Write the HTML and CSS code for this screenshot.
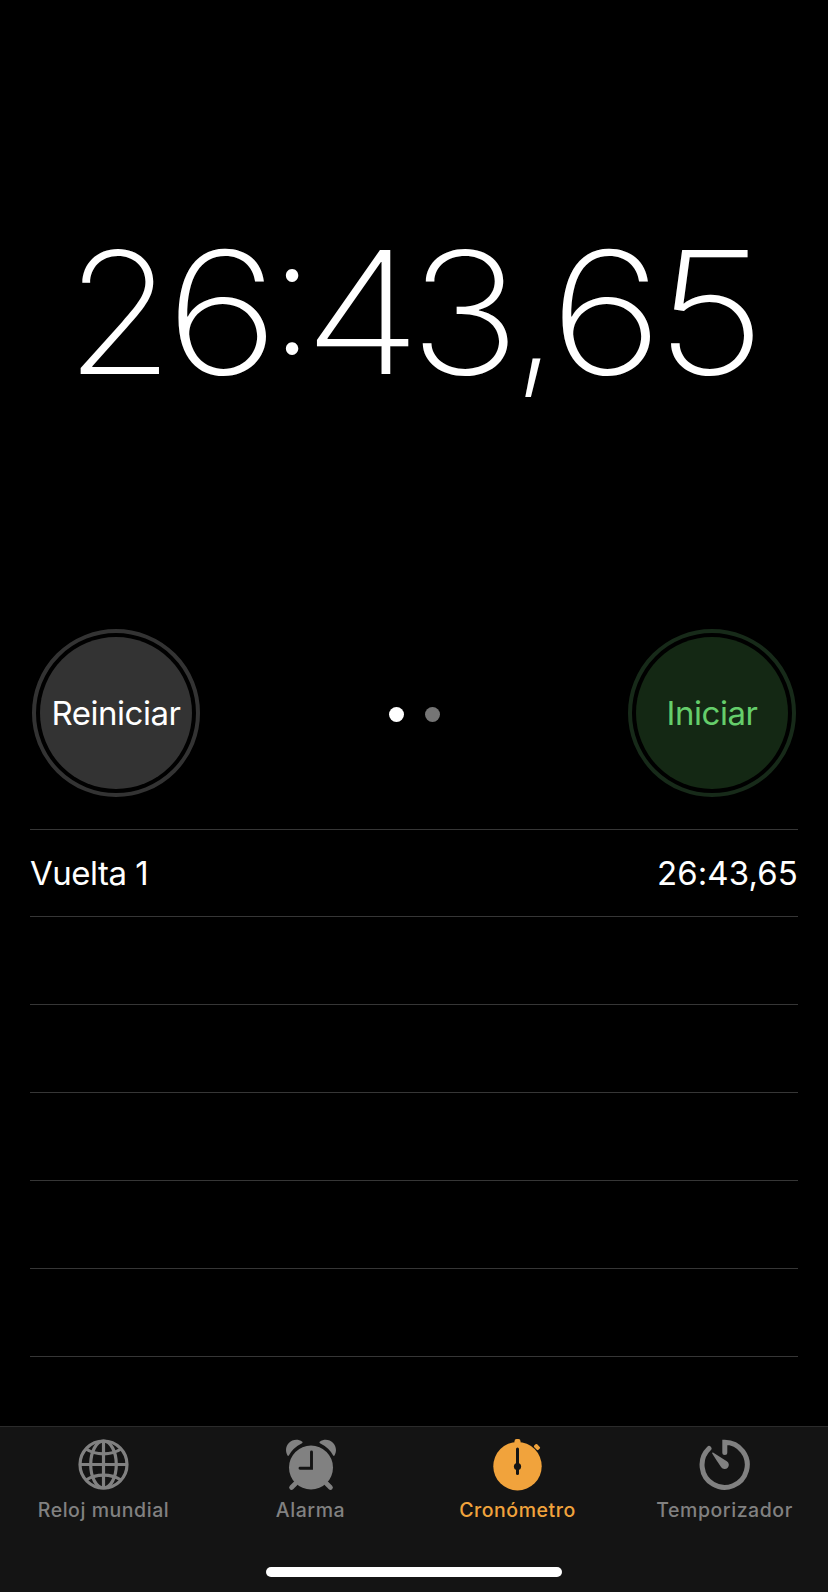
FILE: index.html
```html
<!DOCTYPE html>
<html lang="es">
<head>
  <meta charset="UTF-8" />
  <meta name="viewport" content="width=device-width, initial-scale=1.0" />
  <title>Cronómetro</title>
  <link rel="stylesheet" href="styles.css">
</head>
<body>

<div class="app">
  <div class="tiempo"><span class="dos">2</span><span class="seis">6</span><span class="puntos">:</span><span class="cuatro">4</span><span class="tres">3</span><span class="coma">,</span><span class="seis decimas">6</span><span class="cinco">5</span></div>

  <div class="controles">
    <button class="boton reiniciar"><span>Reiniciar</span></button>
    <div class="paginas">
      <i class="activa"></i>
      <i></i>
    </div>
    <button class="boton iniciar"><span>Iniciar</span></button>
  </div>

  <div class="vueltas">
    <div class="vuelta"><span class="nombre">Vuelta 1</span><span class="marca">26:43,65</span></div>
    <div class="vuelta"></div>
    <div class="vuelta"></div>
    <div class="vuelta"></div>
    <div class="vuelta"></div>
    <div class="vuelta"></div>
    <div class="vuelta"></div>
  </div>

  <nav class="barra">
    <div class="pestanas">
      <a class="pestana mundial">
        <svg viewBox="0 0 52 54" fill="none" stroke="currentColor" stroke-width="3.2">
          <circle cx="25.5" cy="26.5" r="23.5"/>
          <path d="M25.5 3v47M2 26.5h47"/>
          <ellipse cx="25.5" cy="26.5" rx="12.8" ry="23.5"/>
          <path d="M8 11C18 17.5 33 17.5 43 11M8 42C18 35.5 33 35.5 43 42"/>
        </svg>
        <span>Reloj mundial</span>
      </a>
      <a class="pestana alarma">
        <svg viewBox="0 0 52 54">
          <g fill="currentColor">
            <circle cx="26" cy="29.5" r="22"/>
            <path d="M2.5 17.6C-3 7.5 8 -2.5 17.3 3.7Q18 4.5 17 5.3Q8 9.8 4 17.3Q3.2 18.4 2.5 17.6Z"/>
            <path d="M49.5 17.6C55 7.5 44 -2.5 34.7 3.7Q34 4.5 35 5.3Q44 9.8 48 17.3Q48.8 18.4 49.5 17.6Z"/>
          </g>
          <path d="M11 45L6.5 49.5M41 45L45.5 49.5" stroke="currentColor" stroke-width="4.6" stroke-linecap="round"/>
          <path d="M26.5 14V30.2H15" fill="none" stroke="#141414" stroke-width="2.9" stroke-linecap="round"/>
        </svg>
        <span>Alarma</span>
      </a>
      <a class="pestana cronometro">
        <svg viewBox="0 0 52 54">
          <g fill="currentColor">
            <circle cx="25.5" cy="28.2" r="24.2"/>
            <path d="M22.5 8V3.2Q22.5 1 24.5 1H26.5Q28.5 1 28.5 3.2V8Z"/>
            <rect x="42" y="7" width="6" height="4.2" rx="1.2" transform="rotate(45 45 9.1)"/>
          </g>
          <path d="M25.5 11V35.5" stroke="#141414" stroke-width="3" stroke-linecap="round"/>
          <circle cx="25.5" cy="28.5" r="3.6" fill="#141414"/>
        </svg>
        <span>Cronómetro</span>
      </a>
      <a class="pestana temporizador">
        <svg viewBox="0 0 52 54">
          <path d="M10 10.5A22.6 22.6 0 1 0 25.8 4.2V14.5" fill="none" stroke="currentColor" stroke-width="5" stroke-linecap="round"/>
          <path d="M14 14.5L27.8 23.2A4.2 4.2 0 1 1 22.2 29.2Q17.5 22.5 13.2 15.5Q12.9 14.1 14 14.5Z" fill="currentColor"/>
        </svg>
        <span>Temporizador</span>
      </a>
    </div>
    <div class="inicio"></div>
  </nav>
</div>

</body>
</html>
```

FILE: styles.css
```css
body {
  margin: 0;
  background: #000;
  color: #fff;
  font-family: Inter, 'Liberation Sans', sans-serif;
}
.app {
  height: 1592px;
  width: 828px;
  display: flex;
  flex-direction: column;
  overflow: hidden;
}
.tiempo {
  height: 629px;
  box-sizing: border-box;
  padding-top: 212px;
  padding-left: 67px;
  font-size: 170px;
  line-height: 200px;
  font-weight: 200;
  letter-spacing: -8px;
  white-space: nowrap;
}
.tiempo span {
  display: inline-block;
}
.tiempo .dos {
  transform: scaleX(1.03);
}
.tiempo .seis {
  margin-left: 8.5px;
  transform: scaleX(1.15);
}
.tiempo .puntos {
  margin-left: 5px;
  transform: translateY(-18px) scale(0.93, 0.97);
}
.tiempo .cuatro {
  margin-left: 2.4px;
  transform: scaleX(1.13);
}
.tiempo .tres {
  margin-left: 8.5px;
  transform: scaleX(1.1);
}
.tiempo .coma {
  margin-left: 4.5px;
  transform: translateY(1px) scale(0.92, 0.95);
}
.tiempo .decimas {
  margin-left: 5.2px;
}
.tiempo .cinco {
  margin-left: 13.5px;
  transform: scaleX(1.12);
}
.controles {
  display: flex;
  justify-content: space-between;
  align-items: center;
  padding: 0 32px;
  height: 168px;
}
.boton {
  width: 168px;
  height: 168px;
  box-sizing: border-box;
  padding: 4px;
  border: 4px solid #333;
  border-radius: 50%;
  background: #333 content-box;
  color: #fff;
  font-family: inherit;
  font-size: 33px;
  letter-spacing: -0.45px;
}
.boton span {
  display: block;
  white-space: nowrap;
}
.iniciar {
  border-color: #172a19;
  background-color: #142814;
  color: #65ce6b;
}
.paginas {
  display: flex;
  gap: 21px;
  padding-top: 3px;
}
.paginas i {
  width: 15px;
  height: 15px;
  border-radius: 50%;
  background: #757575;
}
.paginas .activa {
  background: #fff;
}
.vueltas {
  margin: 32px 30px 0;
  height: 597px;
  overflow: hidden;
}
.vuelta {
  display: flex;
  justify-content: space-between;
  align-items: center;
  height: 88px;
  box-sizing: border-box;
  border-top: 1px solid #363636;
  font-size: 33px;
  letter-spacing: -0.5px;
}
.vuelta:first-child {
  height: 87px;
}
.marca {
  letter-spacing: 0.1px;
}
.barra {
  height: 166px;
  box-sizing: border-box;
  border-top: 1px solid #2b2b2b;
  background: #141414;
}
.pestanas {
  display: grid;
  grid-template-columns: repeat(4, 1fr);
  height: 140px;
}
.pestana {
  display: flex;
  flex-direction: column;
  align-items: center;
  padding-top: 11px;
  color: #818181;
  font-size: 19.5px;
  line-height: 24px;
  font-weight: 500;
  letter-spacing: 0.55px;
}
.pestana svg {
  width: 52px;
  height: 54px;
  margin-bottom: 6px;
}
.cronometro {
  color: #f1a33c;
}
.inicio {
  width: 296px;
  height: 10px;
  margin: 0 auto;
  border-radius: 5px;
  background: #fff;
}
```
